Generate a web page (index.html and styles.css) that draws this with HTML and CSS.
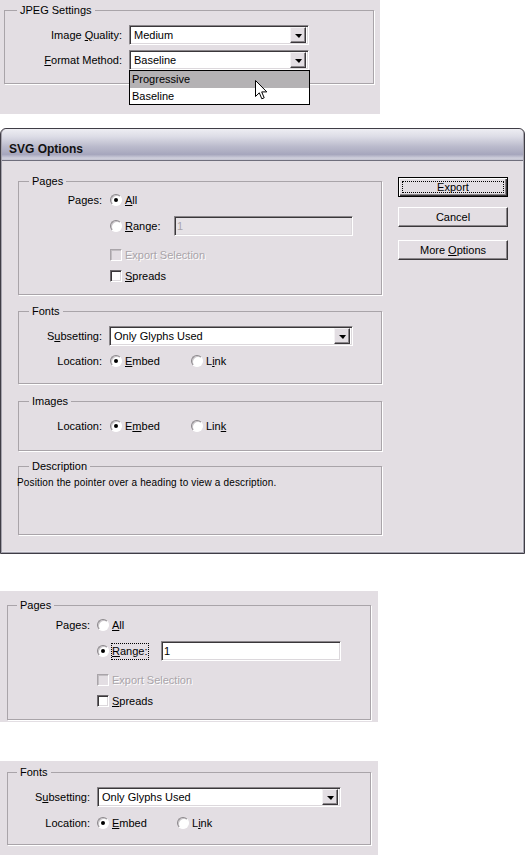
FILE: index.html
```html
<!DOCTYPE html>
<html>
<head>
<meta charset="utf-8">
<link rel="stylesheet" href="styles.css">
</head>
<body>

<div class="panel panel-jpeg">
  <fieldset class="group g-jpeg">
    <legend>JPEG Settings</legend>
    <div class="form f-jpeg">
      <span class="lbl">Image <u>Q</u>uality:</span>
      <div class="select w-jpeg"><span class="val">Medium</span><span class="drop"><i class="tri"></i></span></div>
      <span class="lbl"><u>F</u>ormat Method:</span>
      <div class="select-wrap">
        <div class="select w-jpeg"><span class="val">Baseline</span><span class="drop"><i class="tri"></i></span></div>
        <ul class="droplist">
          <li class="hl">Progressive</li>
          <li>Baseline</li>
        </ul>
        <svg class="cursor" width="13" height="21" viewBox="0 0 13 21"><path d="M0.5 0.5 V16.5 L4.3 12.8 L6.8 18.8 L9.2 17.8 L6.7 11.9 H11.8 Z" fill="#fff" stroke="#000" stroke-width="1" stroke-linejoin="miter"/></svg>
      </div>
    </div>
  </fieldset>
</div>

<div class="dialog">
  <div class="titlebar">SVG Options</div>
  <div class="dlg-body">
    <div class="dlg-left">
      <fieldset class="group g-dlg">
        <legend>Pages</legend>
        <div class="form f-dlg pages">
          <span class="lbl">Pages:</span>
          <label class="opt r1"><span class="radio on"></span><span><u>A</u>ll</span></label>
          <span></span>
          <div class="range-row r2">
            <label class="opt range-opt"><span class="radio"></span><span><u>R</u>ange:</span></label>
            <div class="input disabled w-dlg-in">1</div>
          </div>
          <span></span>
          <label class="opt r3 dis"><span class="check disabled"></span><span>Export Selection</span></label>
          <span></span>
          <label class="opt r4"><span class="check"></span><span><u>S</u>preads</span></label>
        </div>
      </fieldset>

      <fieldset class="group g-dlg fonts">
        <legend>Fonts</legend>
        <div class="form f-dlg">
          <span class="lbl">S<u>u</u>bsetting:</span>
          <div class="select w-dlg"><span class="val">Only Glyphs Used</span><span class="drop"><i class="tri"></i></span></div>
          <span class="lbl">Location:</span>
          <div class="loc">
            <label class="opt embed"><span class="radio on"></span><span><u>E</u>mbed</span></label>
            <label class="opt"><span class="radio"></span><span>L<u>i</u>nk</span></label>
          </div>
        </div>
      </fieldset>

      <fieldset class="group g-dlg images">
        <legend>Images</legend>
        <div class="form f-dlg">
          <span class="lbl">Location:</span>
          <div class="loc">
            <label class="opt embed"><span class="radio on"></span><span>E<u>m</u>bed</span></label>
            <label class="opt"><span class="radio"></span><span>Lin<u>k</u></span></label>
          </div>
        </div>
      </fieldset>

      <fieldset class="group g-dlg desc">
        <legend>Description</legend>
        <p>Position the pointer over a heading to view a description.</p>
      </fieldset>
    </div>

    <div class="dlg-buttons">
      <button class="btn default"><span class="focus">Export</span></button>
      <button class="btn cancel"><span>Cancel</span></button>
      <button class="btn more"><span>More <u>O</u>ptions</span></button>
    </div>
  </div>
</div>

<div class="panel panel-pages">
  <fieldset class="group g-low">
    <legend>Pages</legend>
    <div class="form f-low pages">
      <span class="lbl">Pages:</span>
      <label class="opt r1"><span class="radio"></span><span><u>A</u>ll</span></label>
      <span></span>
      <div class="range-row r2">
        <label class="opt range-opt"><span class="radio on"></span><span class="focus-rect"><u>R</u>ange:</span></label>
        <div class="input w-low-in">1</div>
      </div>
      <span></span>
      <label class="opt r3 dis"><span class="check disabled"></span><span>Export Selection</span></label>
      <span></span>
      <label class="opt r4"><span class="check"></span><span><u>S</u>preads</span></label>
    </div>
  </fieldset>
</div>

<div class="panel panel-fonts">
  <fieldset class="group g-low fonts-low">
    <legend>Fonts</legend>
    <div class="form f-low">
      <span class="lbl">S<u>u</u>bsetting:</span>
      <div class="select w-low"><span class="val">Only Glyphs Used</span><span class="drop"><i class="tri"></i></span></div>
      <span class="lbl">Location:</span>
      <div class="loc">
        <label class="opt embed"><span class="radio on"></span><span><u>E</u>mbed</span></label>
        <label class="opt"><span class="radio"></span><span>L<u>i</u>nk</span></label>
      </div>
    </div>
  </fieldset>
</div>

</body>
</html>
```

FILE: styles.css
```css
* { box-sizing: border-box; }

body {
  margin: 0;
  background: #fff;
  font: 11px/14px "Liberation Sans", Arial, sans-serif;
  color: #000;
}

u { text-underline-offset: 1px; }

/* ---------- panels ---------- */
.panel {
  background: #e3dee3;
  width: 380px;
}
.panel-jpeg {
  height: 114px;
  padding: 3px 0 0 4px;
}
.panel-pages {
  width: 378px;
  height: 131px;
  margin-top: 37px;
  padding: 7px 0 0 7px;
}
.panel-fonts {
  width: 378px;
  height: 94px;
  margin-top: 39px;
  padding: 4px 0 0 7px;
}

/* ---------- group boxes ---------- */
.group {
  margin: 0;
  padding: 0;
  min-width: 0;
  border: 1px solid #a9a4a9;
  box-shadow: 1px 1px 0 #fff;
}
.group legend {
  padding: 0 3px;
  height: 14px;
  line-height: 14px;
  font-size: 11px;
}
.g-jpeg { width: 370px; padding-bottom: 13px; }
.g-jpeg legend { margin-left: 12px; }
.g-dlg { width: 364px; }
.g-dlg legend { margin-left: 10px; }
.g-low { width: 364px; padding-bottom: 8px; }
.g-low legend { margin-left: 9px; }

/* ---------- forms ---------- */
.form {
  display: grid;
  align-items: center;
  column-gap: 7px;
}
.lbl { text-align: right; white-space: nowrap; }

.f-jpeg {
  grid-template-columns: 117px auto;
  row-gap: 5px;
  padding-top: 8px;
}
.f-dlg {
  grid-template-columns: 83px auto;
  padding-top: 8px;
  row-gap: 5px;
}
.f-low {
  grid-template-columns: 82px auto;
  padding-top: 8px;
  row-gap: 6px;
}

.pages { row-gap: 0; padding-top: 2px; }
.f-low.pages { padding-top: 3px; }
.pages > * { height: 20px; }
.pages .r2 { margin-top: 6px; }
.pages .r3 { margin-top: 9px; }
.pages .r4 { margin-top: 1px; }
.pages .lbl { line-height: 20px; }
.g-dlg:first-child { padding-bottom: 8px; }

.fonts { margin-top: 9px; padding-bottom: 12px; }
.images { margin-top: 10px; padding-bottom: 14px; }
.images .form { padding-top: 8px; }
.fonts-low { padding-bottom: 11px; }

.desc { margin-top: 8px; height: 76px; }
.desc p {
  margin: 4px 0 0 -2px;
  font-size: 10px;
  line-height: 12px;
  letter-spacing: 0.15px;
}

/* ---------- options ---------- */
.opt {
  display: flex;
  align-items: center;
  gap: 3px;
  height: 20px;
  white-space: nowrap;
}
.f-dlg .opt { margin-left: 1px; }
.opt.dis { color: #a9a4a9; text-shadow: 1px 1px 0 #fff; }

.loc { display: flex; height: 20px; }
.loc .embed { width: 80px; }

.range-row { display: flex; align-items: center; }
.range-opt { width: 64px; }

.focus-rect {
  outline: 1px dotted #000;
  outline-offset: 0;
  line-height: 15px;
  padding: 0 1px 0 0;
}

.radio {
  width: 12px;
  height: 12px;
  flex: none;
  border-radius: 50%;
  background: #fff;
  border: 1px solid;
  border-color: #8a868a #fff #fff #8a868a;
  box-shadow: inset 1px 1px 0 #c9c5c9;
  display: flex;
  align-items: center;
  justify-content: center;
}
.radio.on::after {
  content: "";
  width: 4px;
  height: 4px;
  border-radius: 50%;
  background: #000;
}

.check {
  width: 12px;
  height: 12px;
  flex: none;
  background: #fff;
  border: 1px solid;
  border-color: #6e6a6e #fff #fff #6e6a6e;
  box-shadow: inset 1px 1px 0 #3a373a, inset -1px -1px 0 #dcd8dc;
}
.check.disabled {
  background: #e3dee3;
  border-color: #a9a4a9 #fff #fff #a9a4a9;
  box-shadow: inset 1px 1px 0 #c2bec2;
}

/* ---------- selects & inputs ---------- */
.select {
  display: flex;
  align-items: center;
  height: 20px;
  background: #fff;
  border: 1px solid;
  border-color: #8a868a #fff #fff #8a868a;
  box-shadow: inset 1px 1px 0 #3a373a, inset -1px -1px 0 #dcd8dc;
  padding: 2px 2px 2px 4px;
}
.select .val { flex: 1; white-space: nowrap; }
.drop {
  width: 16px;
  height: 16px;
  flex: none;
  background: #e3dee3;
  border: 1px solid;
  border-color: #f4f2f4 #3a373a #3a373a #f4f2f4;
  box-shadow: inset -1px -1px 0 #8a868a;
  display: flex;
  align-items: center;
  justify-content: center;
}
.tri {
  width: 0;
  height: 0;
  border-left: 4px solid transparent;
  border-right: 3px solid transparent;
  border-top: 4px solid #000;
  margin: 1px 0 0 0;
}

.w-jpeg { width: 180px; }
.w-dlg { width: 244px; }
.w-low { width: 244px; }

.select-wrap { position: relative; }
.droplist {
  position: absolute;
  left: 0;
  top: 100%;
  width: 181px;
  margin: 0;
  padding: 0;
  list-style: none;
  background: #fff;
  border: 1px solid #000;
  z-index: 2;
}
.droplist li {
  height: 16px;
  line-height: 16px;
  padding-left: 2px;
}
.droplist li.hl { background: #b4b2b4; height: 17px; line-height: 17px; }
.cursor {
  position: absolute;
  left: 126px;
  top: 30px;
  z-index: 3;
}

.input {
  height: 20px;
  background: #fff;
  border: 1px solid;
  border-color: #8a868a #fff #fff #8a868a;
  box-shadow: inset 1px 1px 0 #3a373a, inset -1px -1px 0 #dcd8dc;
  padding: 0 0 0 2px;
  line-height: 18px;
}
.input.disabled { background: #e6e2e6; color: #a9a4a9; }
.w-dlg-in { width: 179px; }
.w-low-in { width: 180px; }

/* ---------- dialog ---------- */
.dialog {
  width: 525px;
  height: 426px;
  margin-top: 14px;
  background: #e3dee3;
  border: 1px solid #3f3d46;
  border-radius: 6px 6px 0 0;
  box-shadow: inset 1px 0 0 #a5a3ad, inset -1px -1px 0 #a5a3ad, inset -2px -2px 0 #e8e6ec;
  display: flex;
  flex-direction: column;
  overflow: hidden;
}
.titlebar {
  height: 32px;
  flex: none;
  margin: 0 1px;
  border-radius: 5px 5px 0 0;
  background: linear-gradient(to bottom, #eeeef3 0%, #dcdce6 25%, #bcbccd 55%, #a6a6bd 82%, #cfcfdc 94%, #c2c2d0 100%);
  border-bottom: 1px solid #6f6e7c;
  font-weight: bold;
  font-size: 12px;
  line-height: 14px;
  padding: 13px 0 0 7px;
  color: #111;
}
.dlg-body {
  display: flex;
  gap: 16px;
  padding: 13px 0 0 17px;
}
.dlg-left { width: 364px; flex: none; }

.dlg-buttons {
  display: flex;
  flex-direction: column;
  padding-top: 3px;
}
.btn {
  width: 110px;
  height: 20px;
  padding: 0;
  font: 11px/14px "Liberation Sans", Arial, sans-serif;
  color: #000;
  background: #e3dee3;
  border: 1px solid;
  border-color: #fff #3a373a #3a373a #fff;
  box-shadow: inset -1px -1px 0 #8a868a;
  display: flex;
  align-items: center;
  justify-content: center;
}
.btn.default {
  border-color: #000;
  box-shadow: inset 1px 1px 0 #fff, inset -1px -1px 0 #3a373a, inset -2px -2px 0 #8a868a;
  padding: 3px;
}
.btn .focus {
  flex: 1;
  align-self: stretch;
  border: 1px dotted #000;
  display: flex;
  align-items: center;
  justify-content: center;
}
.btn.cancel { margin-top: 10px; }
.btn.more { margin-top: 13px; }
```
